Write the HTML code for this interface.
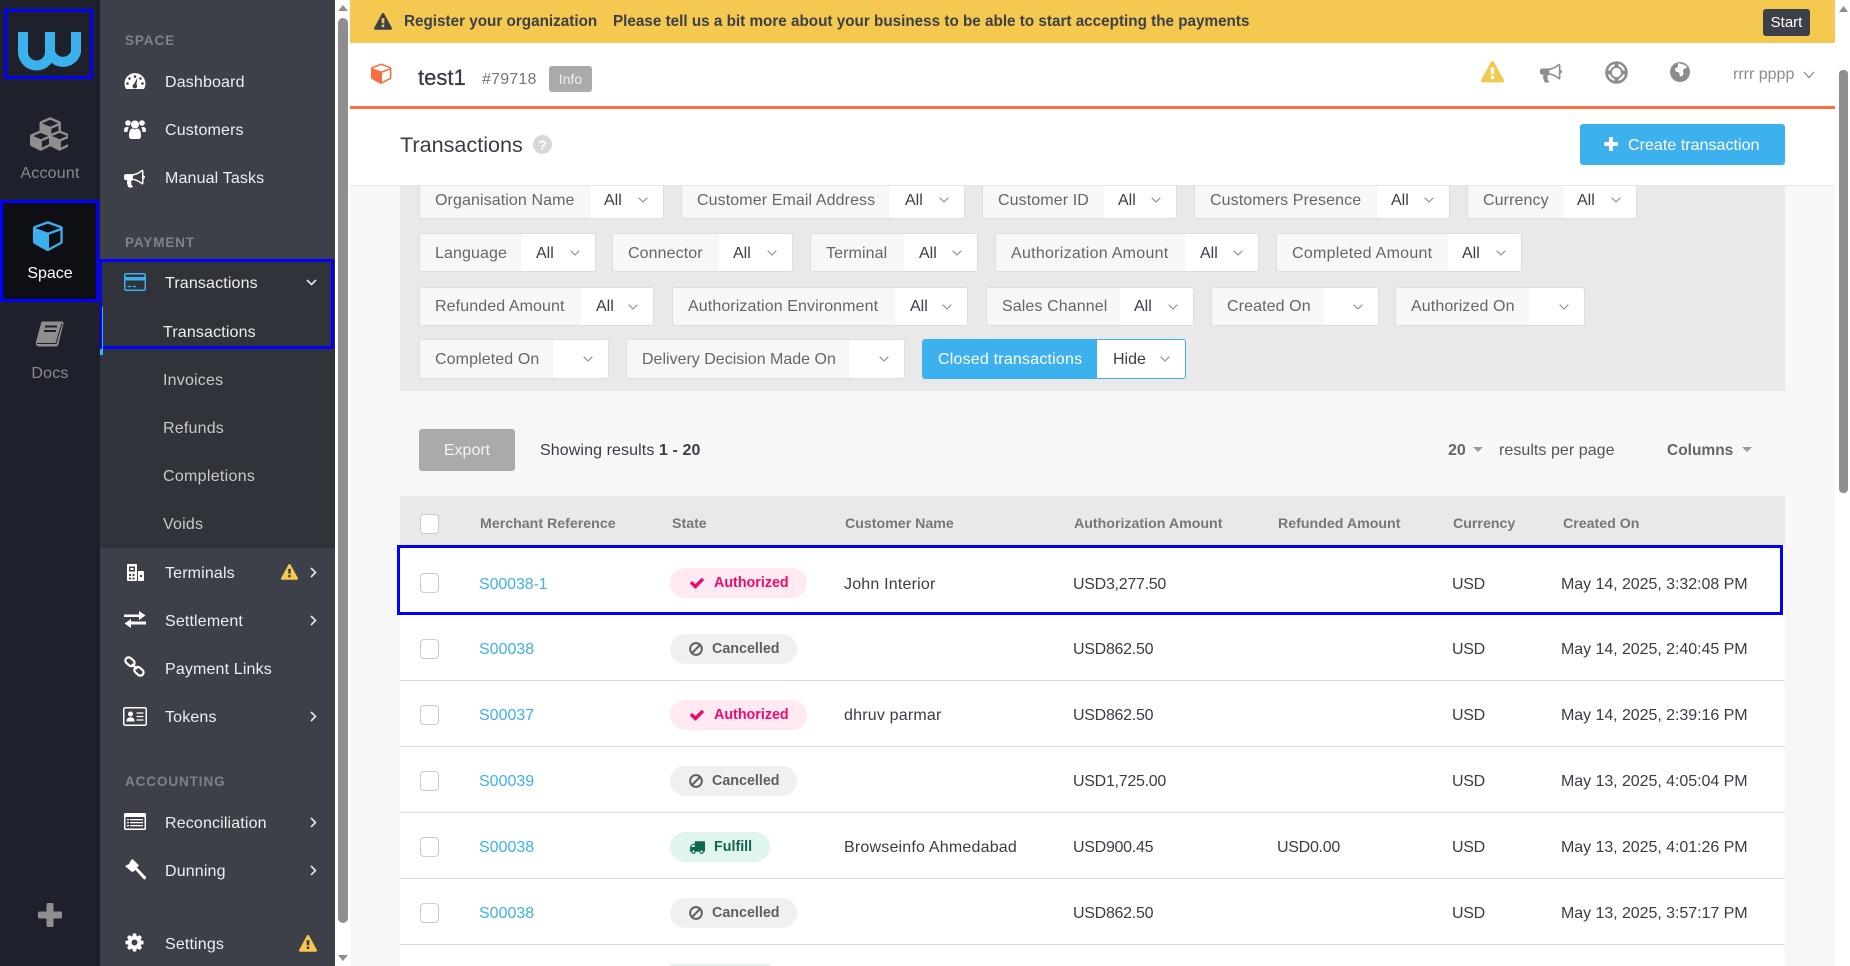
<!DOCTYPE html>
<html lang="en"><head><meta charset="utf-8"><title>Transactions</title>
<style>
*{box-sizing:border-box}
html,body{margin:0;padding:0;width:1850px;height:966px;overflow:hidden;background:#f7f7f7;font-family:"Liberation Sans",Arial,sans-serif;color:#3a3d45;font-size:16px}
.a,.t,svg.a{position:absolute}
.t{line-height:20px;height:20px;white-space:nowrap}
.w{color:#fff}
.m{color:#eceef0;letter-spacing:.15px}
.h{font-size:13.5px;font-weight:bold;letter-spacing:.9px;color:#7f8186;left:125px}
.r{color:#8a8a8a;text-align:center;left:0;width:100px;letter-spacing:.2px}
.sub{color:#c9cacc;left:163px;letter-spacing:.2px}
.f{position:absolute;height:39px;background:#fff;border:1px solid #ddd;border-radius:3px;overflow:hidden}
.f b{position:absolute;left:0;top:0;bottom:0;background:#f7f7f7;font-weight:normal;color:#666;line-height:39px;padding-left:15px;white-space:nowrap;letter-spacing:.1px}
.f b.x{letter-spacing:.27px}
.f i{position:absolute;top:0;font-style:normal;line-height:39px;color:#3a3d45}
.f svg{position:absolute;right:15px;top:16px}
.f.r3 b,.f.r3 i{line-height:37px}
.th{font-weight:bold;font-size:14.2px;color:#777;top:514px}
.cb{position:absolute;left:420px;width:19px;height:20px;background:#fff;border:1px solid #ccc;border-radius:4px}
.ln{position:absolute;left:400px;width:1385px;height:1px;background:#ddd}
.ref{left:479px;color:#3db0ee}
.cn{left:844px;letter-spacing:.2px}
.am{left:1073px;letter-spacing:-.28px}
.cu{left:1452px;letter-spacing:-.3px}
.dt{left:1561px;letter-spacing:-.05px}
.bd{position:absolute;left:670px;height:30px;border-radius:15px;font-size:14.3px;font-weight:bold;line-height:31px;white-space:nowrap}
.au{width:137px;background:#ffe9f2;color:#f0096b}
.ca{width:127px;background:#f0f0f0;color:#5f5f5f}
.fu{width:100px;background:#e0f5ee;color:#12664f}
.bd svg{position:absolute;left:19px;top:7px}
.bd span{position:absolute;left:44px}
.ca svg{left:18px}
.ca span{left:42px}
.chev{fill:none;stroke:#e8e9ea;stroke-width:1.6}
.box{position:absolute;border:3px solid #00f;pointer-events:none}
</style></head><body>
<svg width="0" height="0" style="position:absolute"><defs>
<symbol id="warn" viewBox="0 0 1792 1792"><path d="M1024 1375v-190q0-14-9.5-23.5t-22.5-9.5h-192q-13 0-22.5 9.5t-9.5 23.5v190q0 14 9.5 23.5t22.5 9.5h192q13 0 22.5-9.5t9.5-23.5zm-2-374l18-459q0-12-10-19-13-11-24-11h-220q-11 0-24 11-10 7-10 21l17 457q0 10 10 16.5t24 6.5h185q14 0 23.5-6.5t10.5-16.5zm-14-934l768 1408q35 63-2 126-17 29-46.5 46t-63.5 17h-1536q-34 0-63.5-17t-46.5-46q-37-63-2-126l768-1408q17-31 47-49t65-18 65 18 47 49z"/></symbol>
<symbol id="cube" viewBox="0 0 1792 1792"><path d="M896 1629l640-349v-636l-640 233v752zm-64-865l698-254-698-254-698 254zm832-252v768q0 35-18 65t-49 47l-704 384q-28 16-61 16t-61-16l-704-384q-31-17-49-47t-18-65v-768q0-40 23-73t61-47l704-256q22-8 44-8t44 8l704 256q38 14 61 47t23 73z"/></symbol>
<symbol id="horn" viewBox="0 0 1792 1792"><path d="M1664 736q53 0 90.5 37.5t37.5 90.5-37.5 90.5-90.5 37.5v384q0 52-38 90t-90 38q-417-347-812-380-58 19-91 66t-31 100.5 40 92.5q-20 33-23 65.5t6 58 33.5 55 48 50 61.5 50.5q-29 58-111.5 83t-168.5 11.5-132-55.5q-7-23-29.5-87.5t-32-94.5-23-89-15-101 3.5-98.5 22-110.5h-122q-66 0-113-47t-47-113v-192q0-66 47-113t113-47h480q435 0 896-384 52 0 90 38t38 90v384zm-128 604v-954q-394 302-768 343v270q377 42 768 341z"/></symbol>
<symbol id="check" viewBox="0 0 1792 1792"><path d="M1671 566q0 40-28 68l-724 724-136 136q-28 28-68 28t-68-28l-136-136-362-362q-28-28-28-68t28-68l136-136q28-28 68-28t68 28l294 295 656-657q28-28 68-28t68 28l136 136q28 28 28 68z"/></symbol>
<symbol id="ban" viewBox="0 0 1792 1792"><path d="M1440 893q0-161-87-295l-754 753q137 89 297 89 111 0 211.5-43.5t173.5-116.5 116-174.5 43-212.5zm-999 299l755-754q-135-91-300-91-148 0-273 73t-198 199-73 274q0 162 89 299zm1223-299q0 157-61 300t-163.5 246-245 164-298.5 61-298.5-61-245-164-163.5-246-61-300 61-299.5 163.5-245.5 245-164 298.5-61 298.5 61 245 164 163.5 245.5 61 299.5z"/></symbol>
<symbol id="truck" viewBox="0 0 1792 1792"><path d="M640 1408q0-52-38-90t-90-38-90 38-38 90 38 90 90 38 90-38 38-90zm-384-512h384v-256h-158q-13 0-22 9l-195 195q-9 9-9 22v30zm1280 512q0-52-38-90t-90-38-90 38-38 90 38 90 90 38 90-38 38-90zm256-1088v1024q0 15-4 26.5t-13.5 18.5-16.5 11.5-23.5 6-22.5 2-25.5 0-22.5-.5q0 106-75 181t-181 75-181-75-75-181h-384q0 106-75 181t-181 75-181-75-75-181h-64q-3 0-22.5.5t-25.5 0-22.5-2-23.5-6-16.5-11.5-13.5-18.5-4-26.5q0-26 19-45t45-19v-320q0-8-.5-35t0-38 2.5-34.5 6.5-37 14-30.5 22.5-30l198-198q19-19 50.5-32t58.5-13h160v-192q0-26 19-45t45-19h1024q26 0 45 19t19 45z"/></symbol>
<symbol id="dn" viewBox="0 0 10 6"><path d="M.7.7 5 5 9.3.7" fill="none" stroke="#8c8c8c" stroke-width="1.1"/></symbol>
</defs></svg>

<!-- rail -->
<div class="a" style="left:0;top:0;width:100px;height:966px;background:#1e202c"></div>
<div class="a" style="left:0;top:200px;width:98px;height:102px;background:#0e0f15"></div>
<svg class="a" style="left:0;top:0" width="100" height="90" fill="none"><path d="M23 32V52A13.5 13.5 0 0 0 50 52V32M50 52A13.5 13.5 0 0 0 76 52V32" stroke="#3db0ee" stroke-width="10"/></svg>
<svg class="a" style="left:30px;top:117px" width="38" height="34" viewBox="0 0 2048 1792" fill="#8f8f8f"><path d="M640 1632l384-192v-314l-384 164v342zm-64-454l404-173-404-173-404 173zm1088 454l384-192v-314l-384 164v342zm-64-454l404-173-404-173-404 173zm-448-293l384-165v-266l-384 164v267zm-64-379l441-189-441-189-441 189zm1088 518v416q0 36-19 67t-52 47l-448 224q-25 14-57 14t-57-14l-448-224q-4-2-7-4-2 2-7 4l-448 224q-25 14-57 14t-57-14l-448-224q-33-16-52-47t-19-67v-416q0-38 21.5-70t56.5-48l434-186v-400q0-38 21.5-70t56.5-48l448-192q23-10 50-10t50 10l448 192q35 16 56.5 48t21.5 70v400l434 186q36 16 57 48t21 70z"/></svg>
<div class="t r" style="top:164px">Account</div>
<svg class="a" style="left:33px;top:219px" width="32" height="32" fill="#3db0ee"><use href="#cube"/></svg>
<div class="t w" style="left:0;width:100px;text-align:center;top:264px">Space</div>
<svg class="a" style="left:35px;top:320px" width="30" height="30" viewBox="0 0 30 30"><path d="M8 1.5h19a1.5 1.5 0 0 1 1.5 2L23.5 24a3 3 0 0 1-3 2.5H4.5C1.5 26.5 .5 24.5 1 22L6 3.5A2 2 0 0 1 8 1.5z" fill="#8f8f8f"/><path d="M10 6.5h12M9 11h12" stroke="#1e202c" stroke-width="2"/><path d="M2 23.5h19l6-20" stroke="#1e202c" stroke-width="1" fill="none"/></svg>
<div class="t r" style="top:364px">Docs</div>
<svg class="a" style="left:38px;top:903px" width="24" height="24" fill="#8f8f8f"><rect x="8.5" width="7" height="24" rx="1.5"/><rect y="8.5" width="24" height="7" rx="1.5"/></svg>

<!-- sub sidebar -->
<div class="a" style="left:100px;top:0;width:235px;height:966px;background:#3d4048"></div>
<div class="a" style="left:100px;top:259px;width:235px;height:289px;background:#31333a"></div>
<div class="t h" style="top:31px">SPACE</div>
<svg class="a" style="left:124px;top:73px" width="22" height="16" viewBox="0 0 22 16" fill="#fff"><path d="M2 16A10.5 10.5 0 1 1 20 16z"/><g fill="#3d4048"><circle cx="11" cy="3.5" r="1.3"/><circle cx="5.5" cy="5.5" r="1.3"/><circle cx="16.5" cy="5.5" r="1.3"/><circle cx="3.5" cy="10.5" r="1.3"/><circle cx="18.5" cy="10.5" r="1.3"/><path d="M13.5 4.5 12.5 11.5a2.3 2.3 0 1 1-2.5-.5z"/></g></svg>
<div class="t m" style="left:165px;top:73px">Dashboard</div>
<svg class="a" style="left:124px;top:118px" width="22" height="22" viewBox="0 0 22 22" fill="#fff"><circle cx="4" cy="5" r="2.8"/><circle cx="18" cy="5" r="2.8"/><circle cx="11" cy="6.5" r="4"/><path d="M0 13c0-3 1-4 3-4l2 .5c-1 1-1.5 2.5-1.5 4.5H1c-.5 0-1-.5-1-1zM22 13c0-3-1-4-3-4l-2 .5c1 1 1.5 2.5 1.5 4.5H21c.5 0 1-.5 1-1z"/><path d="M5 18c0-5 1.5-7.5 3.5-7.5l2.5 1 2.5-1c2 0 3.5 2.5 3.5 7.5 0 2-1 3-3 3H8c-2 0-3-1-3-3z"/></svg>
<div class="t m" style="left:165px;top:121px">Customers</div>
<svg class="a" style="left:124px;top:167px" width="21" height="21" fill="#fff"><use href="#horn"/></svg>
<div class="t m" style="left:165px;top:169px">Manual Tasks</div>
<div class="t h" style="top:233px">PAYMENT</div>
<svg class="a" style="left:124px;top:273px" width="22" height="18" viewBox="0 0 22 18"><rect x=".75" y=".75" width="20.5" height="16.5" rx="1.5" fill="none" stroke="#3db0ee" stroke-width="1.5"/><rect x="1" y="4" width="20" height="3.5" fill="#3db0ee"/><path d="M3.5 13.5h3.5M8.5 13.5h3.5" stroke="#3db0ee" stroke-width="1.2"/></svg>
<div class="t m" style="left:165px;top:274px">Transactions</div>
<svg class="a chev" style="left:306px;top:279px" width="11" height="7" viewBox="0 0 11 7"><path d="M1 1l4.500 4.500L10 1"/></svg>
<div class="t m" style="left:163px;top:323px">Transactions</div>
<div class="t sub" style="top:371px">Invoices</div>
<div class="t sub" style="top:419px">Refunds</div>
<div class="t sub" style="top:467px;letter-spacing:.3px">Completions</div>
<div class="t sub" style="top:515px">Voids</div>
<svg class="a" style="left:126px;top:564px" width="18" height="18" viewBox="0 0 18 18"><rect x="1" y="0" width="10" height="17" rx="1" fill="#fff"/><rect x="3" y="2.5" width="6" height="5" fill="#3d4048"/><rect x="4.5" y="4" width="3" height="2" fill="#fff"/><path d="M3 10h2v2H3zM6.5 10h2v2h-2zM3 13.5h2v2H3zM6.5 13.5h2v2h-2z" fill="#3d4048"/><path d="M12 7h5c.5 0 1 .5 1 1v8c0 .5-.5 1-1 1h-5z" fill="#fff"/><path d="M14 11h2v2h-2z" fill="#3d4048"/></svg>
<div class="t m" style="left:165px;top:564px">Terminals</div>
<svg class="a" style="left:281px;top:564px" width="17" height="17" fill="#f5c84f"><use href="#warn"/></svg>
<svg class="a chev" style="left:310px;top:567px" width="7" height="11" viewBox="0 0 7 11"><path d="M1 1l4.500 4.500L1 10"/></svg>
<svg class="a" style="left:124px;top:611px" width="22" height="17" viewBox="0 0 22 17" fill="#fff"><path d="M0 3.5h15V0L21.5 4.5 15 9V6H0zM22 10.5H7V8L.5 12.5 7 17V13.5h15z"/></svg>
<div class="t m" style="left:165px;top:612px">Settlement</div>
<svg class="a chev" style="left:310px;top:615px" width="7" height="11" viewBox="0 0 7 11"><path d="M1 1l4.500 4.500L1 10"/></svg>
<svg class="a" style="left:124px;top:656px" width="21" height="21" viewBox="0 0 21 21" fill="none" stroke="#fff" stroke-width="2.2"><rect x="1" y="2.5" width="10" height="6.5" rx="3.2" transform="rotate(40 6 5.7)"/><rect x="10" y="12" width="10" height="6.5" rx="3.2" transform="rotate(40 15 15.2)"/><path d="M8 8l5 5"/></svg>
<div class="t m" style="left:165px;top:660px">Payment Links</div>
<svg class="a" style="left:123px;top:707px" width="24" height="19" viewBox="0 0 24 19"><rect x=".75" y=".75" width="22.5" height="17.5" rx="1.5" fill="none" stroke="#fff" stroke-width="1.5"/><circle cx="7.5" cy="7" r="2.5" fill="#fff"/><path d="M3.5 14.5c0-3 1.5-4.3 4-4.3s4 1.3 4 4.3z" fill="#fff"/><path d="M13.5 6h7M13.5 9.5h7M13.5 13h7" stroke="#fff" stroke-width="1.3"/></svg>
<div class="t m" style="left:165px;top:708px">Tokens</div>
<svg class="a chev" style="left:310px;top:711px" width="7" height="11" viewBox="0 0 7 11"><path d="M1 1l4.500 4.500L1 10"/></svg>
<div class="t h" style="top:772px">ACCOUNTING</div>
<svg class="a" style="left:124px;top:813px" width="22" height="17" viewBox="0 0 22 17"><rect width="22" height="17" rx="1.5" fill="#fff"/><rect x="1.5" y="4" width="19" height="11.5" fill="#3d4048"/><path d="M3 6h2v1.3H3zM6 6h13v1.3H6zM3 9h2v1.3H3zM6 9h13v1.3H6zM3 12h2v1.3H3zM6 12h13v1.3H6z" fill="#fff"/></svg>
<div class="t m" style="left:165px;top:814px">Reconciliation</div>
<svg class="a chev" style="left:310px;top:817px" width="7" height="11" viewBox="0 0 7 11"><path d="M1 1l4.500 4.500L1 10"/></svg>
<svg class="a" style="left:124px;top:859px" width="22" height="22" viewBox="0 0 22 22" fill="#fff"><path d="M8.5 0 15 6.500 12.500 9 10.500 12 8 13 1 7 5 5 6.500 2z"/><path d="M11 10.500 13 8.500 21.500 17.500a1.500 1.500 0 0 1-2 2.500z"/></svg>
<div class="t m" style="left:165px;top:862px">Dunning</div>
<svg class="a chev" style="left:310px;top:865px" width="7" height="11" viewBox="0 0 7 11"><path d="M1 1l4.500 4.500L1 10"/></svg>
<svg class="a" style="left:124px;top:932px" width="21" height="21" viewBox="0 0 1792 1792" fill="#fff"><path d="M1152 896q0-106-75-181t-181-75-181 75-75 181 75 181 181 75 181-75 75-181zm512-109v222q0 12-8 23t-20 13l-185 28q-19 54-39 91 35 50 107 138 10 12 10 25t-9 23q-27 37-99 108t-94 71q-12 0-26-9l-138-108q-44 23-91 38-16 136-29 186-7 28-36 28h-222q-14 0-24.5-8.5t-11.5-21.5l-28-184q-49-16-90-37l-141 107q-10 9-25 9-14 0-25-11-126-114-165-168-7-10-7-23 0-12 8-23 15-21 51-66.5t54-70.5q-27-50-41-99l-183-27q-13-2-21-12.5t-8-23.5v-222q0-12 8-23t19-13l186-28q14-46 39-92-40-57-107-138-10-12-10-24 0-10 9-23 26-36 98.5-107.5t94.5-71.5q13 0 26 10l138 107q44-23 91-38 16-136 29-186 7-28 36-28h222q14 0 24.5 8.5t11.5 21.5l28 184q49 16 90 37l142-107q9-9 24-9 13 0 25 10 129 119 165 170 7 8 7 22 0 12-8 23-15 21-51 66.5t-54 70.5q26 50 41 98l183 28q13 2 21 12.5t8 23.5z"/></svg>
<div class="t m" style="left:165px;top:935px">Settings</div>
<svg class="a" style="left:299px;top:935px" width="18" height="18" fill="#f5c84f"><use href="#warn"/></svg>

<!-- left scrollbar -->
<div class="a" style="left:335px;top:0;width:15px;height:966px;background:#fff"></div>
<div class="a" style="left:338px;top:18px;width:10px;height:905px;background:#8e8e8e;border-radius:5px"></div>
<svg class="a" style="left:338px;top:5px" width="10" height="6" fill="#8e8e8e"><path d="M5 0l5 6H0z"/></svg>
<svg class="a" style="left:338px;top:955px" width="10" height="6" fill="#8e8e8e"><path d="M5 6l5-6H0z"/></svg>

<!-- filters -->
<div class="a" style="left:400px;top:170px;width:1385px;height:221px;background:#e9e9e9"></div>
<div class="f" style="left:419px;top:180px;width:245px"><b style="width:170px">Organisation Name</b><i style="left:184px">All</i><svg width="10" height="6"><use href="#dn"/></svg></div>
<div class="f" style="left:681px;top:180px;width:284px"><b style="width:208px">Customer Email Address</b><i style="left:223px">All</i><svg width="10" height="6"><use href="#dn"/></svg></div>
<div class="f" style="left:982px;top:180px;width:195px"><b style="width:121px">Customer ID</b><i style="left:135px">All</i><svg width="10" height="6"><use href="#dn"/></svg></div>
<div class="f" style="left:1194px;top:180px;width:256px"><b style="width:183px">Customers Presence</b><i style="left:196px">All</i><svg width="10" height="6"><use href="#dn"/></svg></div>
<div class="f" style="left:1467px;top:180px;width:170px"><b style="width:96px">Currency</b><i style="left:109px">All</i><svg width="10" height="6"><use href="#dn"/></svg></div>

<div class="f" style="left:419px;top:233px;width:177px"><b style="width:102px">Language</b><i style="left:116px">All</i><svg width="10" height="6"><use href="#dn"/></svg></div>
<div class="f" style="left:612px;top:233px;width:181px"><b style="width:106px">Connector</b><i style="left:120px">All</i><svg width="10" height="6"><use href="#dn"/></svg></div>
<div class="f" style="left:810px;top:233px;width:168px"><b style="width:93px">Terminal</b><i style="left:108px">All</i><svg width="10" height="6"><use href="#dn"/></svg></div>
<div class="f" style="left:995px;top:233px;width:264px"><b class="x" style="width:189px">Authorization Amount</b><i style="left:204px">All</i><svg width="10" height="6"><use href="#dn"/></svg></div>
<div class="f" style="left:1276px;top:233px;width:246px"><b class="x" style="width:171px">Completed Amount</b><i style="left:185px">All</i><svg width="10" height="6"><use href="#dn"/></svg></div>

<div class="f r3" style="left:419px;top:287px;width:235px"><b style="width:161px">Refunded Amount</b><i style="left:176px">All</i><svg width="10" height="6"><use href="#dn"/></svg></div>
<div class="f r3" style="left:672px;top:287px;width:296px"><b style="width:222px">Authorization Environment</b><i style="left:237px">All</i><svg width="10" height="6"><use href="#dn"/></svg></div>
<div class="f r3" style="left:986px;top:287px;width:208px"><b style="width:133px">Sales Channel</b><i style="left:147px">All</i><svg width="10" height="6"><use href="#dn"/></svg></div>
<div class="f r3" style="left:1211px;top:287px;width:168px"><b style="width:112px">Created On</b><svg width="10" height="6"><use href="#dn"/></svg></div>
<div class="f r3" style="left:1395px;top:287px;width:190px"><b style="width:133px">Authorized On</b><svg width="10" height="6"><use href="#dn"/></svg></div>

<div class="f" style="left:419px;top:339px;width:190px;height:40px"><b style="width:134px">Completed On</b><svg width="10" height="6"><use href="#dn"/></svg></div>
<div class="f" style="left:626px;top:339px;width:279px;height:40px"><b style="width:223px;letter-spacing:0">Delivery Decision Made On</b><svg width="10" height="6"><use href="#dn"/></svg></div>
<div class="f" style="left:922px;top:339px;width:264px;height:40px;border-color:#3db0ee"><b style="width:174px;background:#3db0ee;color:#fff;letter-spacing:.2px">Closed transactions</b><i style="left:190px">Hide</i><svg width="10" height="6"><use href="#dn"/></svg></div>

<!-- toolbar -->
<div class="a" style="left:419px;top:429px;width:96px;height:42px;background:#aaa;border-radius:3px;color:#f3f3f3;text-align:center;line-height:43px">Export</div>
<div class="t" style="left:540px;top:441px;letter-spacing:.1px">Showing results <b>1 - 20</b></div>
<div class="t" style="left:1448px;top:441px;font-weight:bold;color:#666">20</div>
<svg class="a" style="left:1473px;top:447px" width="10" height="5" fill="#999"><path d="M0 0h10L5 5z"/></svg>
<div class="t" style="left:1499px;top:441px;color:#555;letter-spacing:.05px">results per page</div>
<div class="t" style="left:1667px;top:441px;font-weight:bold;font-size:15.5px;color:#666">Columns</div>
<svg class="a" style="left:1742px;top:447px" width="10" height="5" fill="#999"><path d="M0 0h10L5 5z"/></svg>

<!-- table -->
<div class="a" style="left:400px;top:496px;width:1385px;height:49px;background:#e9e9e9"></div>
<div class="a" style="left:400px;top:545px;width:1385px;height:421px;background:#fff"></div>
<div class="cb" style="top:514px"></div>
<div class="t th" style="left:480px">Merchant Reference</div>
<div class="t th" style="left:672px">State</div>
<div class="t th" style="left:845px">Customer Name</div>
<div class="t th" style="left:1074px">Authorization Amount</div>
<div class="t th" style="left:1278px">Refunded Amount</div>
<div class="t th" style="left:1453px">Currency</div>
<div class="t th" style="left:1563px">Created On</div>

<div class="ln" style="top:680px"></div><div class="ln" style="top:746px"></div><div class="ln" style="top:812px"></div><div class="ln" style="top:878px"></div><div class="ln" style="top:944px"></div>

<div class="cb" style="top:573px"></div>
<div class="t ref" style="top:575px;letter-spacing:-.1px">S00038-1</div>
<div class="bd au" style="top:568px"><svg width="16" height="16" fill="#f0096b"><use href="#check"/></svg><span>Authorized</span></div>
<div class="t cn" style="top:575px">John Interior</div>
<div class="t am" style="top:575px">USD3,277.50</div>
<div class="t cu" style="top:575px">USD</div>
<div class="t dt" style="top:575px">May 14, 2025, 3:32:08 PM</div>

<div class="cb" style="top:639px"></div>
<div class="t ref" style="top:640px">S00038</div>
<div class="bd ca" style="top:634px"><svg width="16" height="16" fill="#5f5f5f"><use href="#ban"/></svg><span>Cancelled</span></div>
<div class="t am" style="top:640px">USD862.50</div>
<div class="t cu" style="top:640px">USD</div>
<div class="t dt" style="top:640px">May 14, 2025, 2:40:45 PM</div>

<div class="cb" style="top:705px"></div>
<div class="t ref" style="top:706px">S00037</div>
<div class="bd au" style="top:700px"><svg width="16" height="16" fill="#f0096b"><use href="#check"/></svg><span>Authorized</span></div>
<div class="t cn" style="top:706px">dhruv parmar</div>
<div class="t am" style="top:706px">USD862.50</div>
<div class="t cu" style="top:706px">USD</div>
<div class="t dt" style="top:706px">May 14, 2025, 2:39:16 PM</div>

<div class="cb" style="top:771px"></div>
<div class="t ref" style="top:772px">S00039</div>
<div class="bd ca" style="top:766px"><svg width="16" height="16" fill="#5f5f5f"><use href="#ban"/></svg><span>Cancelled</span></div>
<div class="t am" style="top:772px">USD1,725.00</div>
<div class="t cu" style="top:772px">USD</div>
<div class="t dt" style="top:772px">May 13, 2025, 4:05:04 PM</div>

<div class="cb" style="top:837px"></div>
<div class="t ref" style="top:838px">S00038</div>
<div class="bd fu" style="top:832px"><svg width="16" height="16" fill="#12664f"><use href="#truck"/></svg><span>Fulfill</span></div>
<div class="t cn" style="top:838px">Browseinfo Ahmedabad</div>
<div class="t am" style="top:838px">USD900.45</div>
<div class="t am" style="left:1277px;top:838px">USD0.00</div>
<div class="t cu" style="top:838px">USD</div>
<div class="t dt" style="top:838px">May 13, 2025, 4:01:26 PM</div>

<div class="cb" style="top:903px"></div>
<div class="t ref" style="top:904px">S00038</div>
<div class="bd ca" style="top:898px"><svg width="16" height="16" fill="#5f5f5f"><use href="#ban"/></svg><span>Cancelled</span></div>
<div class="t am" style="top:904px">USD862.50</div>
<div class="t cu" style="top:904px">USD</div>
<div class="t dt" style="top:904px">May 13, 2025, 3:57:17 PM</div>

<div class="a" style="left:670px;top:964px;width:100px;height:2px;background:#e0f5ee;border-radius:15px 15px 0 0"></div>

<!-- banner + header -->
<div class="a" style="left:350px;top:0;width:1485px;height:43px;background:#f5c84f"></div>
<svg class="a" style="left:374px;top:13px" width="18" height="18" fill="#3d4048"><use href="#warn"/></svg>
<div class="t" style="left:404px;top:12px;font-weight:bold;font-size:15.25px;color:#3d4048">Register your organization</div>
<div class="t" style="left:613px;top:12px;font-size:15.25px;font-weight:bold;color:#3d4048">Please tell us a bit more about your business to be able to start accepting the payments</div>
<div class="a" style="left:1763px;top:9px;width:47px;height:27px;background:#3d4048;border-radius:3px;color:#fff;font-size:15px;text-align:center;line-height:27px">Start</div>

<div class="a" style="left:350px;top:43px;width:1485px;height:142px;background:#fff"></div>
<div class="a" style="left:350px;top:106px;width:1485px;height:3px;background:#f96f3f"></div>
<div class="a" style="left:350px;top:185px;width:1485px;height:1px;background:#e5e5e5"></div>
<svg class="a" style="left:371px;top:62px" width="22" height="22" fill="#f96f3f"><use href="#cube"/></svg>
<div class="t" style="left:418px;top:68px;font-size:22px;-webkit-text-stroke:.3px #3a3d45">test1</div>
<div class="t" style="left:482px;top:70px;color:#777;letter-spacing:.2px">#79718</div>
<div class="a" style="left:549px;top:66px;width:43px;height:26px;background:#aaa;border-radius:3px;color:#f0f0f0;font-size:14px;text-align:center;line-height:26px">Info</div>
<svg class="a" style="left:1481px;top:61px" width="23" height="23" fill="#f5c84f"><use href="#warn"/></svg>
<svg class="a" style="left:1540px;top:61px" width="22" height="22" fill="#8d8d8d"><use href="#horn"/></svg>
<svg class="a" style="left:1605px;top:61px" width="23" height="23" viewBox="0 0 23 23" fill="none" stroke="#8d8d8d"><circle cx="11.5" cy="11.5" r="10" stroke-width="2.6"/><circle cx="11.5" cy="11.5" r="5.6" stroke-width="2"/><path d="M11.5 2v4M11.5 17v4M2 11.5h4M17 11.5h4" stroke-width="4"/></svg>
<svg class="a" style="left:1670px;top:62px" width="20" height="20" viewBox="0 0 20 20"><circle cx="10" cy="10" r="10" fill="#8d8d8d"/><path d="M8 1c2 1 7 1 9 4-1 2-3 1-4 3 0 2 1 3 0 5-1 1-2 2-3 1-1-2 0-3-2-4-2 0-3-1-3-3 1-2 3-1 3-3z" fill="#fff"/></svg>
<div class="t" style="left:1733px;top:65px;color:#8d8d8d">rrrr pppp</div>
<svg class="a" style="left:1803px;top:71px" width="12" height="8" viewBox="0 0 12 8" fill="none" stroke="#8d8d8d" stroke-width="1.3"><path d="M1 1l5 5.500L11 1"/></svg>

<div class="t" style="left:400px;top:135px;font-size:21.6px;color:#3a3d45">Transactions</div>
<svg class="a" style="left:533px;top:135px" width="19" height="19" viewBox="0 0 18 18"><circle cx="9" cy="9" r="9" fill="#d8d8d8"/><text x="9" y="14" text-anchor="middle" font-family="Liberation Sans" font-weight="bold" font-size="13" fill="#fff">?</text></svg>
<div class="a" style="left:1580px;top:124px;width:205px;height:41px;background:#3db0ee;border-radius:3px"></div>
<svg class="a" style="left:1604px;top:137px" width="14" height="14" fill="#fff"><rect x="5" width="4" height="14"/><rect y="5" width="14" height="4"/></svg>
<div class="t w" style="left:1628px;top:135px;font-size:16.1px">Create transaction</div>

<!-- right scrollbar -->
<div class="a" style="left:1835px;top:0;width:15px;height:966px;background:#fff"></div>
<div class="a" style="left:1839px;top:70px;width:9px;height:423px;background:#8e8e8e;border-radius:4px"></div>
<svg class="a" style="left:1839px;top:6px" width="9" height="6" fill="#8e8e8e"><path d="M4.500 0l4.500 6H0z"/></svg>

<!-- annotation boxes -->
<div class="box" style="left:4px;top:9px;width:89px;height:70px"></div>
<div class="box" style="left:0;top:200px;width:99px;height:102px"></div>
<div class="box" style="left:100px;top:259px;width:234px;height:90px;border-left-width:2px"></div>
<div class="box" style="left:397px;top:545px;width:1386px;height:70px"></div>
<div class="a" style="left:102px;top:307px;width:1px;height:42px;background:#3db0ee"></div>
<div class="a" style="left:100px;top:349px;width:3px;height:6px;background:#3db0ee"></div>
</body></html>
